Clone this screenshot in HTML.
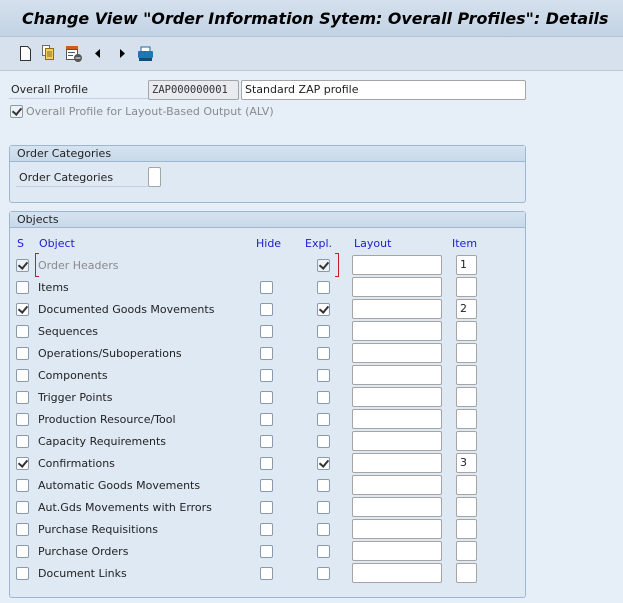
<!DOCTYPE html>
<html><head><meta charset="utf-8"><style>
*{margin:0;padding:0;box-sizing:border-box}
body{width:623px;height:603px;background:#e6eef7;font-family:"DejaVu Sans","Liberation Sans",sans-serif;font-size:11px;color:#222;position:relative;overflow:hidden}
.a{position:absolute;white-space:nowrap}
#title{left:0;top:0;width:623px;height:37px;background:linear-gradient(#d4e0ec,#c3d3e5);border-bottom:1px solid #b3c4d8}
#title span{position:absolute;left:22px;top:9px;font-family:"DejaVu Sans",sans-serif;font-weight:bold;font-style:italic;font-size:15.9px;color:#000}
#tb{left:0;top:37px;width:623px;height:34px;background:#d6e1ed;border-bottom:1px solid #b8c6d6}
.grp{position:absolute;left:9px;width:517px;background:#dfe9f4;border:1px solid #9fb6cf;border-radius:3px}
.gh{height:16px;background:linear-gradient(#d6e3f0,#c8d9ea);border-bottom:1px solid #9fb6cf;padding-left:7px;line-height:15px;font-size:11px}
.cb{position:absolute;width:13px;height:13px;border:1px solid #8a9aad;background:#fff;border-radius:2px}
.cb.c::after{content:"";position:absolute;left:3px;top:0px;width:4px;height:7px;border:solid #333;border-width:0 2px 2px 0;transform:rotate(40deg)}
.cb.d{background:#eef2f6}
.in{position:absolute;height:20px;background:#fff;border:1px solid #a5a5a5;border-radius:2px;font-size:11px;line-height:18px;padding-left:3px}
.bl{color:#1c1ccd}
.ul{position:absolute;height:1px;background:#c2cfdd}
</style></head><body>
<div class="a" id="title"><span>Change View "Order Information Sytem: Overall Profiles": Details</span></div>
<div class="a" id="tb">
<svg width="170" height="34" style="position:absolute;left:0;top:0">
<path d="M20.5 9.5h7l3 3v11h-10z" fill="#fff" stroke="#333"/>
<rect x="42.5" y="8.5" width="7" height="10" fill="#fff" stroke="#6a6a6a"/>
<rect x="45.5" y="11.5" width="8" height="11" fill="#f2d060" stroke="#8a6d1c"/>
<path d="M47 15h5M47 17h5M47 19h5" stroke="#8a6d1c"/>
<rect x="66" y="9" width="12" height="3" fill="#d45a1c"/>
<rect x="66.5" y="12.5" width="11" height="10" fill="#fff" stroke="#555"/>
<path d="M68 15.5h7M68 18.5h5" stroke="#555"/>
<circle cx="78" cy="21" r="4" fill="#555"/><path d="M75.5 21h5" stroke="#fff"/>
<path d="M100 12v9l-5-4.5z" fill="#000"/>
<path d="M120 12v9l5-4.5z" fill="#000"/>
<rect x="141" y="10" width="9" height="5" fill="#fff" stroke="#1a6aa0"/>
<rect x="138" y="14" width="15" height="7" rx="1" fill="#1a78b5"/>
<rect x="139" y="21" width="13" height="3" fill="#0d4f7a"/>
</svg></div>
<div class="a" style="left:11px;top:83px">Overall Profile</div>
<div class="ul" style="left:9px;top:98px;width:230px"></div>
<div class="in" style="left:148px;top:80px;width:91px;background:#e8ecf0;font-family:'DejaVu Sans Mono','Liberation Mono',monospace;font-size:10.5px;color:#333">ZAP000000001</div>
<div class="in" style="left:241px;top:80px;width:285px">Standard ZAP profile</div>
<div class="cb c d" style="left:10px;top:105px"></div>
<div class="a" style="left:26px;top:105px;color:#8a8a8a">Overall Profile for Layout-Based Output (ALV)</div>

<div class="grp" style="top:145px;height:58px"><div class="gh">Order Categories</div></div>
<div class="a" style="left:19px;top:171px">Order Categories</div>
<div class="ul" style="left:16px;top:186px;width:132px"></div>
<div class="in" style="left:148px;top:167px;width:13px;height:20px"></div>

<div class="grp" style="top:211px;height:387px"><div class="gh">Objects</div></div>
<div class="a bl" style="left:17px;top:237px">S</div>
<div class="a bl" style="left:39px;top:237px">Object</div>
<div class="a bl" style="left:256px;top:237px">Hide</div>
<div class="a bl" style="left:305px;top:237px">Expl.</div>
<div class="a bl" style="left:354px;top:237px">Layout</div>
<div class="a bl" style="left:452px;top:237px">Item</div>

<div class="a" style="left:35px;top:253px;width:4px;height:24px;border:solid #c0202a;border-width:1px 0 1px 1px"></div>
<div class="a" style="left:335px;top:253px;width:4px;height:24px;border:solid #c0202a;border-width:1px 1px 1px 0"></div>

<div id="rows"></div>
<script>
var R=[["Order Headers",1,0,1,"1",1],["Items",0,0,0,""],["Documented Goods Movements",1,0,1,"2"],["Sequences",0,0,0,""],["Operations/Suboperations",0,0,0,""],["Components",0,0,0,""],["Trigger Points",0,0,0,""],["Production Resource/Tool",0,0,0,""],["Capacity Requirements",0,0,0,""],["Confirmations",1,0,1,"3"],["Automatic Goods Movements",0,0,0,""],["Aut.Gds Movements with Errors",0,0,0,""],["Purchase Requisitions",0,0,0,""],["Purchase Orders",0,0,0,""],["Document Links",0,0,0,""]];
var h="";
R.forEach(function(r,i){var y=265+i*22;var dis=r[5];
h+='<div class="cb'+(r[1]?' c':'')+(dis?' d':'')+'" style="left:16px;top:'+(y-6)+'px"></div>';
h+='<div class="a" style="left:38px;top:'+(y-6)+'px;'+(dis?'color:#8a8a8a':'')+'">'+r[0]+'</div>';
if(!dis)h+='<div class="cb" style="left:260px;top:'+(y-6)+'px"></div>';
h+='<div class="cb'+(r[3]?' c':'')+(dis?' d':'')+'" style="left:317px;top:'+(y-6)+'px"></div>';
h+='<div class="in" style="left:352px;top:'+(y-10)+'px;width:90px"></div>';
h+='<div class="in" style="left:456px;top:'+(y-10)+'px;width:21px">'+r[4]+'</div>';});
document.getElementById("rows").innerHTML=h;
</script>
</body></html>
